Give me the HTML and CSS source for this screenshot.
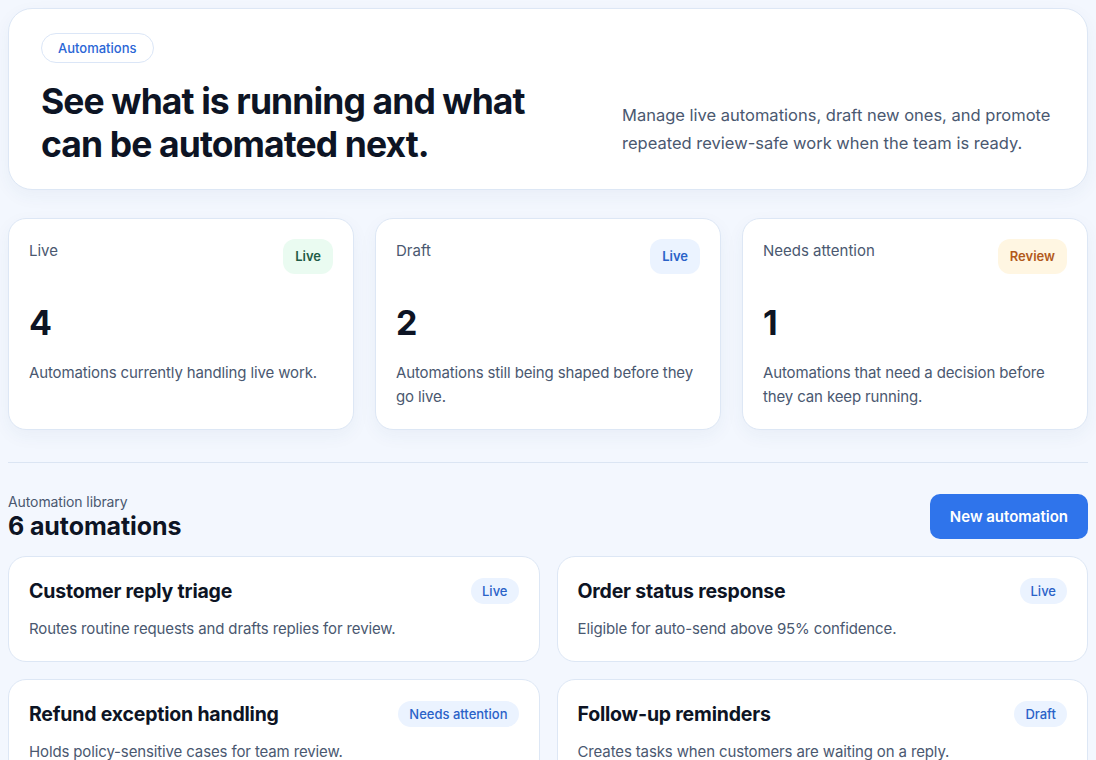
FILE: index.html
```html
<!DOCTYPE html>
<html lang="en">
<head>
    <meta charset="UTF-8">
    <meta name="viewport" content="width=device-width, initial-scale=1.0">
    <title>Automations</title>
    <link rel="stylesheet" href="styles.css">
</head>
<body>

    <!-- Шапка раздела -->
    <section class="hero">
        <div class="hero-main">
            <span class="pill">Automations</span>
            <h1>See what is running and what can be automated next.</h1>
        </div>
        <p class="hero-text">Manage live automations, draft new ones, and promote repeated review-safe work when the team is ready.</p>
    </section>

    <!-- Сводка по статусам -->
    <section class="stats">
        <div class="stat">
            <div class="stat-head">
                <span class="stat-label">Live</span>
                <span class="badge badge-green">Live</span>
            </div>
            <div class="stat-num">4</div>
            <p class="stat-text">Automations currently handling live work.</p>
        </div>
        <div class="stat">
            <div class="stat-head">
                <span class="stat-label">Draft</span>
                <span class="badge badge-blue">Live</span>
            </div>
            <div class="stat-num">2</div>
            <p class="stat-text">Automations still being shaped before they go live.</p>
        </div>
        <div class="stat">
            <div class="stat-head">
                <span class="stat-label">Needs attention</span>
                <span class="badge badge-amber">Review</span>
            </div>
            <div class="stat-num">1</div>
            <p class="stat-text">Automations that need a decision before they can keep running.</p>
        </div>
    </section>

    <hr class="divider">

    <!-- Библиотека автоматизаций -->
    <div class="lib-head">
        <div>
            <div class="lib-label">Automation library</div>
            <h2>6 automations</h2>
        </div>
        <button class="btn">New automation</button>
    </div>

    <section class="list">
        <div class="item">
            <div class="item-head">
                <h3>Customer reply triage</h3>
                <span class="tag">Live</span>
            </div>
            <p>Routes routine requests and drafts replies for review.</p>
        </div>
        <div class="item">
            <div class="item-head">
                <h3>Order status response</h3>
                <span class="tag">Live</span>
            </div>
            <p>Eligible for auto-send above 95% confidence.</p>
        </div>
        <div class="item">
            <div class="item-head">
                <h3>Refund exception handling</h3>
                <span class="tag">Needs attention</span>
            </div>
            <p>Holds policy-sensitive cases for team review.</p>
        </div>
        <div class="item">
            <div class="item-head">
                <h3>Follow-up reminders</h3>
                <span class="tag">Draft</span>
            </div>
            <p>Creates tasks when customers are waiting on a reply.</p>
        </div>
    </section>

</body>
</html>
```

FILE: styles.css
```css
/* Общие стили страницы */
body {
    margin: 0;
    padding: 8px;
    background: #f3f7fe;
    font-family: Inter, "Noto Sans", sans-serif;
    color: #0d1424;
}
h1, h2, h3, p {
    margin: 0;
}
/* Шапка */
.hero {
    display: flex;
    justify-content: space-between;
    align-items: flex-end;
    background: #fff;
    border: 1px solid #dde7f5;
    border-radius: 24px;
    padding: 24px 32px 23px;
    box-shadow: 0 6px 18px rgba(40, 70, 120, 0.05);
}
.pill {
    display: inline-block;
    padding: 7px 16px;
    font-size: 13px;
    line-height: 14px;
    font-weight: 500;
    color: #2a66d6;
    border: 1px solid #dbe6f7;
    border-radius: 999px;
}
.hero h1 {
    margin-top: 17px;
    width: 500px;
    font-size: 35.5px;
    line-height: 43px;
    font-weight: 700;
    letter-spacing: -0.9px;
}
.hero-text {
    width: 433px;
    margin-bottom: 9px;
    font-size: 16.5px;
    line-height: 28px;
    color: #4a5870;
}
/* Карточки со статистикой */
.stats {
    display: grid;
    grid-template-columns: repeat(3, 1fr);
    gap: 21px;
    margin-top: 28px;
}
.stat {
    background: #fff;
    border: 1px solid #dde7f5;
    border-radius: 18px;
    padding: 20px;
    box-shadow: 0 6px 18px rgba(40, 70, 120, 0.05);
}
.stat-head {
    display: flex;
    justify-content: space-between;
    align-items: flex-start;
}
.stat-label {
    margin-top: 2px;
    font-size: 15px;
    color: #4a5870;
}
.badge {
    padding: 10px 12px;
    font-size: 13px;
    line-height: 15px;
    font-weight: 600;
    border-radius: 12px;
}
.badge-green {
    background: #eafbf1;
    color: #1f5c47;
}
.badge-blue {
    background: #ebf3ff;
    color: #2a62c8;
}
.badge-amber {
    background: #fff6e2;
    color: #b2591b;
}
.stat-num {
    margin-top: 27px;
    font-size: 34px;
    line-height: 44px;
    font-weight: 700;
}
.stat-text {
    margin-top: 16px;
    font-size: 15px;
    line-height: 24px;
    letter-spacing: -0.13px;
    color: #4a5870;
}
.divider {
    border: 0;
    border-top: 1px solid #dbe5f3;
    margin: 32px 0 29px;
}
/* Заголовок библиотеки */
.lib-head {
    display: flex;
    justify-content: space-between;
    align-items: flex-end;
}
.lib-label {
    font-size: 14px;
    line-height: 20px;
    letter-spacing: -0.1px;
    color: #4a5870;
}
.lib-head h2 {
    font-size: 25px;
    line-height: 28px;
    font-weight: 700;
    letter-spacing: -0.1px;
}
.btn {
    margin-bottom: 1px;
    padding: 13px 20px;
    font-family: inherit;
    font-size: 15px;
    font-weight: 600;
    color: #fff;
    background: #2f74eb;
    border: 0;
    border-radius: 10px;
}
/* Список автоматизаций */
.list {
    display: grid;
    grid-template-columns: 1fr 1fr;
    gap: 17px;
    margin-top: 16px;
}
.item {
    background: #fff;
    border: 1px solid #dde7f5;
    border-radius: 18px;
    padding: 20px;
}
.item-head {
    display: flex;
    justify-content: space-between;
    align-items: center;
}
.item h3 {
    font-size: 19.5px;
    line-height: 28px;
    font-weight: 700;
    letter-spacing: -0.2px;
}
.tag {
    padding: 5px 11px;
    font-size: 13px;
    font-weight: 500;
    color: #2a62c8;
    background: #ebf3ff;
    border-radius: 999px;
}
.item p {
    margin-top: 12px;
    font-size: 15px;
    line-height: 24px;
    letter-spacing: -0.13px;
    color: #4a5870;
}
```
